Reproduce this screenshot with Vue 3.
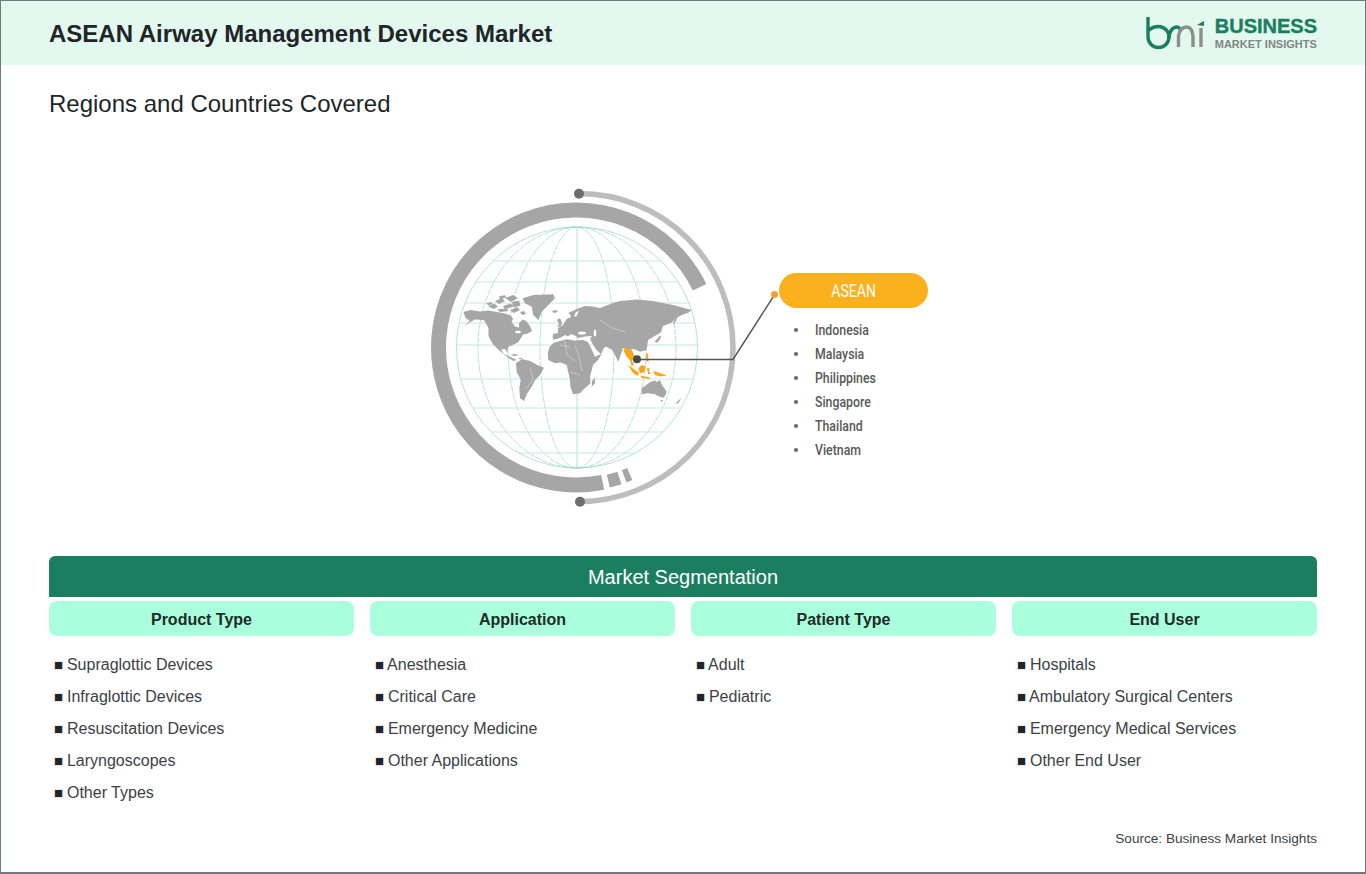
<script setup>
const columns = [
  { title: "Product Type", items: ["Supraglottic Devices", "Infraglottic Devices", "Resuscitation Devices", "Laryngoscopes", "Other Types"] },
  { title: "Application", items: ["Anesthesia", "Critical Care", "Emergency Medicine", "Other Applications"] },
  { title: "Patient Type", items: ["Adult", "Pediatric"] },
  { title: "End User", items: ["Hospitals", "Ambulatory Surgical Centers", "Emergency Medical Services", "Other End User"] },
];
const countries = ["Indonesia", "Malaysia", "Philippines", "Singapore", "Thailand", "Vietnam"];

// globe grid, in the coordinates of the svg
const cx = 157;
const cy = 167.5;
const meridians = [37, 69, 99];
const parallels = [81, 102, 123, 143, 165, 199, 228, 252, 273];

// ring arcs, degrees clockwise from the top
function polar(r, deg, ox, oy) {
  const a = (deg * Math.PI) / 180;
  return [ox + r * Math.sin(a), oy - r * Math.cos(a)];
}
function arc(r, from, to, ox = cx - 1, oy = cy) {
  const [x1, y1] = polar(r, from, ox, oy);
  const [x2, y2] = polar(r, to, ox, oy);
  const large = to - from > 180 ? 1 : 0;
  return `M${x1.toFixed(1)} ${y1.toFixed(1)}A${r} ${r} 0 ${large} 1 ${x2.toFixed(1)} ${y2.toFixed(1)}`;
}
const mainRing = arc(137.5, 168.8, 424);
const ringBlockA = arc(137.5, 161.6, 166.4);
const ringBlockB = arc(137.5, 157, 159.5);
const outerRing = arc(154, 0, 180, 159, 167.6);
</script>

<template>
  <div class="page">
    <header class="topbar">
      <h1>ASEAN Airway Management Devices Market</h1>
      <div class="logo">
        <svg class="logo-mark" viewBox="0 0 60 34" width="60" height="34">
          <g fill="none" stroke="#1b7f5f" stroke-width="3.4">
            <path d="M2 1V21a10.5 10.5 0 1 0 10.5-10.5c-4 0-7 1.2-10 4" />
            <path d="M23 22c0-7 4-11 8-11c1 0 2 .5 3 2" />
          </g>
          <g fill="none" stroke="#8a8f8d" stroke-width="3.4">
            <path d="M32.500 31V20c1-6 4-9 8-9s6 4 6.500 9v11" />
            <path d="M55 12v19" />
          </g>
          <path d="M51 9l7-4v5z" fill="#1b7f5f" />
        </svg>
        <div class="logo-text">
          <div class="logo-top">BUSINESS</div>
          <div class="logo-bottom">MARKET INSIGHTS</div>
        </div>
      </div>
    </header>

    <h2 class="subtitle">Regions and Countries Covered</h2>

    <div class="diagram">
      <svg class="globe" viewBox="0 0 520 330" width="520" height="330">
        <defs>
          <clipPath id="globeClip"><circle :cx="cx" :cy="cy" r="120.5" /></clipPath>
        </defs>
        <!-- rings -->
        <g fill="none">
          <path :d="outerRing" stroke="#bdbdbd" stroke-width="5.5" />
          <path :d="mainRing" stroke="#a6a6a6" stroke-width="15" />
          <path :d="ringBlockA" stroke="#a6a6a6" stroke-width="13" />
          <path :d="ringBlockB" stroke="#a6a6a6" stroke-width="13" />
        </g>
        <circle cx="159" cy="13.7" r="5" fill="#6d6d6d" />
        <circle cx="160" cy="321.7" r="5" fill="#6d6d6d" />

        <!-- grid -->
        <g fill="none" stroke="#96d4cf" stroke-width="0.7">
          <circle :cx="cx" :cy="cy" r="120.5" />
          <line :x1="cx" y1="47" :x2="cx" y2="288" />
          <ellipse v-for="rx in meridians" :key="rx" :cx="cx" :cy="cy" :rx="rx" ry="120.5" stroke-dasharray="6 1" />
          <g clip-path="url(#globeClip)">
            <line v-for="y in parallels" :key="y" x1="30" :y1="y" x2="290" :y2="y" stroke="#c4e8e5" stroke-width="1" />
          </g>
        </g>

        <!-- map, points are page px, the group shifts them into the svg -->
        <g transform="translate(-420 -180)" fill="#a6a6a6">
          <!-- north america -->
          <path d="M463.500 312L470.700 310L480 311.500L488.300 310.500L496.700 312L505 313.500L511 315.500L513 319L511.500 322L515 326.500L519 327.500L519 323L523 319.500L526 321L530 326L532 331L527 334L523 334.500L520.700 338.300L518.300 342.300L512.700 345L508 347L507.300 352.500L505 349L501 349.500L504 354L510 356.700L516.700 360L513.300 361L506.700 356.500L500 351L493 344.500L488.500 336L488.500 328L484 320L475 319.500L470 322.300L465 325.700L469.700 320.500L465.700 318.300Z" />
          <path d="M522.700 298.300L533.300 295L553.300 294.300L555 298.300L548.300 305L541.700 311.700L538.300 320L533.300 315L531.700 306.700L525 303.300Z" />
          <path d="M488 306.500l6-3 4 3-4 2.500zM495 301l7-3 3 3-6 3zM503 306l8-2.500 2 3-8 3zM505 298l8-3 5 3-7 4zM512 302l7-1.500 1.500 5-7 2zM497 309.500l9-1 3 2.500-9 1zM510 310.500l7-3.500 3 3-6 3zM520 312l4-1 2 3-4 1zM486 303.500l5-1.500 1.500 2-4 1.500zM499 296.500l6-1.500 1 2.500-6 1.500z" />
          <path d="M510 355l5-1 4 1-5 1zM519 358l3 0 0 1-3 0z" />
          <!-- south america -->
          <path d="M516 363.300L521.700 359L530 361L537.300 365L544 367.700L540 375L535 380L531.700 386.700L527.300 393.300L524 401L520 398.300L519.300 388.300L520.700 380L516.700 371.700Z" />
          <!-- africa -->
          <path d="M547.700 353.300L549.500 347L553.300 343L560 341L566.700 339.300L575 340.500L583.300 340L588 342L591 348L595 356.700L602 353.500L598 360L593 365L590 376.700L590.500 383.300L584 389L580 393.300L573 394.300L570.500 387L570 380L566.700 365L561 362.500L555 363.300L548.300 360Z" />
          <path d="M591.700 386.700L592 381L595 378L595 383Z" />
          <!-- eurasia -->
          <path d="M552.700 337L553 334L558 333L558 328L563 325L566.700 319L571 317L570 314L568 313L576.700 309L585 306L593 306.500L600 308L613 303L620 301L637 299.500L653 301L673 305L691.700 310L688 313L684 314L676 318L671 323L663 326L660 333L653 337L648 340L647 348L646.700 350L640 351.700L634 349L628 350L623 348L621 354L618.300 361.700L615 355L612 350L606 346.500L604 348L601 354L596.500 350L592 343L590 339L592 336L585 336.500L578 338L576 336L571 334L568 336.500L565 335L561 337.500L557 339L553 339.500Z" />
          <path d="M557 320l3-2 2 5-1 3-4 1 2-3zM552 311l4-1 2 2-4 1zM655 341l3-3 2-3 1 2-2 4-3 2zM659 330l2-3 1 3-2 3zM673 323l2-4 3-3-2 5-2 3z" />
          <!-- australia and the islands -->
          <path d="M641.700 388.300L650 382.300L655 380.500L657 382L660 380L662 385L666.700 391.700L665 396L663.300 397.700L658 396L655 394.300L647.300 393.300L641.700 394.300Z" />
          <path d="M660 400l3 0-1 2zM676 403l2-2 3-3-1 3-3 3z" />
        </g>
        <!-- seas and borders drawn over the land -->
        <g transform="translate(-420 -180)" fill="#fff">
          <ellipse cx="518" cy="332" rx="3" ry="1.300" />
          <ellipse cx="582" cy="333" rx="4" ry="1.500" />
          <ellipse cx="595" cy="333" rx="1.300" ry="3.500" />
          <path d="M576 312l3-1-3 6-2-1z" />
        </g>
        <g transform="translate(-420 -180)" fill="none" stroke="#fff" stroke-width="0.5" opacity="0.7">
          <path d="M565 341l2 14 8 6M575 345l4 12 3 14M570 372l10 3M530 367l3 12-6 9M600 320l12 8 14 4M560 345l10 2" />
        </g>
        <!-- asean countries -->
        <g transform="translate(-420 -180)" fill="#f5a81c">
          <path d="M626.700 347.700L631.700 350L635 356.700L632 361L634 364L631.700 366.700L630 360L626.700 356.700L623.300 350Z" />
          <path d="M628 365L631 367L639 373L638 376L633 373Z" />
          <path d="M638.300 368.300L641.700 365L646 366.700L644.300 372.300L640 373.300Z" />
          <path d="M640 375.500L650 377.500L650 379L642 378Z" />
          <path d="M647 368L650 368.500L649 371L651 374L648 374ZM653 371L660 373L666.700 375.500L660 376.500L655 375ZM646 353L648 354L648.500 363L646.500 361Z" />
        </g>

        <!-- pointer -->
        <polyline points="217,179.500 313,179.500 355,114" fill="none" stroke="#555" stroke-width="1.400" />
        <circle cx="217" cy="179.300" r="4" fill="#4a4a4a" />
        <circle cx="354.500" cy="114.500" r="3.500" fill="#f0a030" />
      </svg>

      <div class="region">
        <div class="region-pill"><span>ASEAN</span></div>
        <ul class="region-list">
          <li v-for="name in countries" :key="name"><span>{{ name }}</span></li>
        </ul>
      </div>
    </div>

    <section class="segments">
      <div class="segments-bar">Market Segmentation</div>
      <div class="segments-grid">
        <div v-for="col in columns" :key="col.title" class="segment">
          <div class="segment-head">{{ col.title }}</div>
          <ul>
            <li v-for="item in col.items" :key="item"><span class="sq">■</span> {{ item }}</li>
          </ul>
        </div>
      </div>
    </section>

    <div class="source">Source: Business Market Insights</div>
  </div>
</template>

<style>
html,
body {
  margin: 0;
  background: #fff;
}
</style>

<style scoped>
.page {
  box-sizing: border-box;
  width: 1366px;
  height: 874px;
  border: 1px solid #6f7a7a;
  border-bottom-width: 2px;
  font-family: "Liberation Sans", Arial, sans-serif;
  color: #212529;
  overflow: hidden;
  position: relative;
}

.topbar {
  height: 64px;
  background: #e3f8ef;
  display: flex;
  align-items: center;
  justify-content: space-between;
  padding: 2px 48px 0;
  box-sizing: border-box;
}

.topbar h1 {
  margin: 0;
  font-size: 24px;
  font-weight: 700;
  color: #212529;
}

.logo {
  display: flex;
  align-items: center;
  gap: 9px;
  margin-top: -2px;
}

.logo-text {
  display: flex;
  flex-direction: column;
}

.logo-top {
  font-size: 20px;
  line-height: 20px;
  font-weight: 700;
  color: #1b7f5f;
  -webkit-text-stroke: 0.4px #1b7f5f;
}

.logo-bottom {
  font-size: 11px;
  line-height: 13px;
  font-weight: 700;
  color: #808785;
  margin-top: 2px;
}

.subtitle {
  margin: 24px 0 0 48px;
  font-size: 24px;
  line-height: 30px;
  font-weight: 400;
  color: #212529;
}

.diagram {
  display: flex;
  margin: 61px 0 0 419px;
  height: 376px;
  position: relative;
}

.globe {
  display: block;
}

.region {
  position: absolute;
  left: 359px;
  top: 93px;
  width: 149px;
}

.region-pill {
  height: 35px;
  line-height: 35px;
  border-radius: 18px;
  background: #fbb01e;
  color: #fff;
  text-align: center;
  font-family: Roboto, "Liberation Sans", sans-serif;
  font-size: 18px;
}

.region-pill span {
  display: inline-block;
  transform: scaleX(0.78);
}

.region-list {
  list-style: none;
  margin: 10px 0 0;
  padding: 0 0 0 36px;
  font-family: Roboto, "Liberation Sans", sans-serif;
  font-size: 14px;
  font-weight: 500;
  color: #595959;
}

.region-list li {
  height: 24px;
  line-height: 24px;
  position: relative;
}

.region-list li span {
  display: inline-block;
  transform: scaleX(0.88);
  transform-origin: left center;
}

.region-list li::before {
  content: "";
  position: absolute;
  left: -21px;
  top: 10px;
  width: 4px;
  height: 4px;
  border-radius: 50%;
  background: #666;
}

.segments {
  margin: 0 48px;
}

.segments-bar {
  height: 41px;
  line-height: 43px;
  background: #1b7f5f;
  color: #fff;
  text-align: center;
  font-size: 20px;
  border-radius: 6px 6px 0 0;
}

.segments-grid {
  display: grid;
  grid-template-columns: repeat(4, 1fr);
  gap: 16px;
  margin-top: 4px;
}

.segment-head {
  height: 35px;
  line-height: 37px;
  background: #aaffdc;
  border-radius: 8px;
  text-align: center;
  font-size: 16px;
  font-weight: 700;
  color: #212b27;
}

.segment ul {
  list-style: none;
  margin: 13px 0 0;
  padding: 0 0 0 5px;
}

.segment li {
  height: 32px;
  line-height: 32px;
  font-size: 16px;
  color: #3c4145;
}

.sq {
  display: inline-block;
  width: 8.500px;
  color: #212529;
  font-size: 15px;
}

.source {
  position: absolute;
  right: 48px;
  top: 830px;
  font-size: 13.600px;
  color: #3c4145;
}
</style>
